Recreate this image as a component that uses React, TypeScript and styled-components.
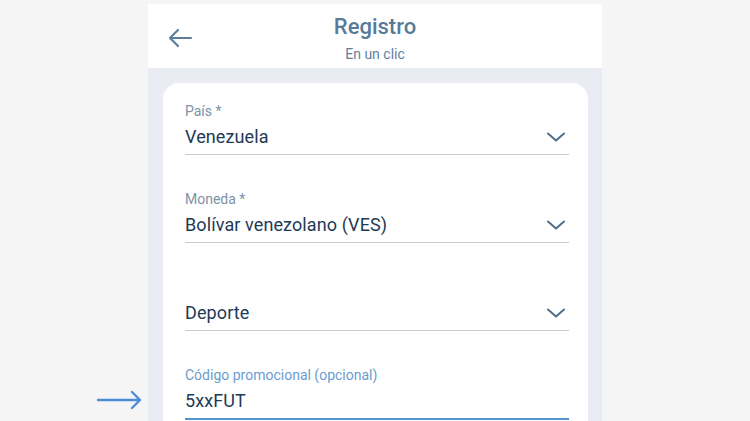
import React from 'react'
import styled, { createGlobalStyle } from 'styled-components'

const GlobalStyle = createGlobalStyle`
  html, body {
    margin: 0;
    padding: 0;
    background: #f5f5f6;
    font-family: Roboto, 'Noto Sans', sans-serif;
    overflow: hidden;
  }
`

const Page = styled.div`
  position: relative;
  display: flex;
  justify-content: center;
  padding-top: 4px;
  height: 417px;
  overflow: hidden;
`

const Screen = styled.div`
  width: 454px;
  display: flex;
  flex-direction: column;
  background: #e9edf3;
`

const Header = styled.header`
  position: relative;
  height: 64px;
  flex-shrink: 0;
  background: #ffffff;
  display: flex;
  flex-direction: column;
  align-items: center;
  padding-top: 10px;
  box-sizing: border-box;
`

const BackButton = styled.button`
  position: absolute;
  left: 18px;
  top: 20px;
  width: 28px;
  height: 28px;
  padding: 0;
  border: none;
  background: transparent;
  display: flex;
  align-items: center;
  justify-content: center;
`

const Title = styled.h1`
  margin: 0;
  font-size: 22px;
  line-height: 26px;
  font-weight: 500;
  color: #587b9b;
`

const Subtitle = styled.div`
  font-size: 14px;
  line-height: 18px;
  color: #5f7f9c;
  margin-top: 5px;
`

const Body = styled.div`
  flex: 1;
  padding: 15px 14px 0 15px;
`

const Card = styled.div`
  background: #ffffff;
  border-radius: 16px 16px 0 0;
  height: 100%;
  padding: 19px 19px 0 22px;
  box-sizing: border-box;
`

const Field = styled.div<{ $active?: boolean }>`
  display: flex;
  flex-direction: column;
  border-bottom: ${(p) => (p.$active ? '2px solid #5592d0' : '1px solid #c3ced7')};
  & + & {
    margin-top: 35px;
  }
`

const Label = styled.div<{ $active?: boolean }>`
  height: 18px;
  font-size: 14px;
  line-height: 18px;
  color: ${(p) => (p.$active ? '#6b9ccf' : '#7c93a8')};
`

const ValueRow = styled.div`
  height: 34px;
  display: flex;
  align-items: center;
  justify-content: space-between;
  padding-bottom: 1px;
  box-sizing: border-box;
`

const Value = styled.span`
  font-size: 18px;
  color: #1d3a57;
  letter-spacing: 0.1px;
`

const Chevron = styled.svg`
  width: 20px;
  height: 20px;
  margin-right: 3px;
`

const Pointer = styled.svg`
  position: absolute;
  left: 96px;
  top: 390px;
  width: 47px;
  height: 20px;
`

const ChevronIcon = () => (
  <Chevron viewBox="0 0 20 20" fill="none">
    <path d="M2 6.5l8 7 8-7" stroke="#4f6f8c" strokeWidth="2" strokeLinecap="round" strokeLinejoin="round" />
  </Chevron>
)

type FieldProps = {
  label?: string
  value: string
  select?: boolean
  active?: boolean
}

const FormField = ({ label, value, select, active }: FieldProps) => (
  <Field $active={active}>
    <Label $active={active}>{label}</Label>
    <ValueRow>
      <Value>{value}</Value>
      {select && <ChevronIcon />}
    </ValueRow>
  </Field>
)

export default function App() {
  return (
    <Page>
      <GlobalStyle />
      <Screen>
        <Header>
          <BackButton aria-label="Volver">
            <svg width="26" height="26" viewBox="0 0 26 26" fill="none">
              <path
                d="M24 13H3M11 5l-8 8 8 8"
                stroke="#5d7e9b"
                strokeWidth="2.2"
                strokeLinecap="round"
                strokeLinejoin="round"
              />
            </svg>
          </BackButton>
          <Title>Registro</Title>
          <Subtitle>En un clic</Subtitle>
        </Header>
        <Body>
          <Card>
            <FormField label="País *" value="Venezuela" select />
            <FormField label="Moneda *" value="Bolívar venezolano (VES)" select />
            <FormField value="Deporte" select />
            <FormField label="Código promocional (opcional)" value="5xxFUT" active />
          </Card>
        </Body>
      </Screen>
      <Pointer viewBox="0 0 47 20" fill="none">
        <path
          d="M2 10H44M36 2l8 8-8 8"
          stroke="#4a8fd6"
          strokeWidth="2.4"
          strokeLinecap="round"
          strokeLinejoin="round"
        />
      </Pointer>
    </Page>
  )
}
